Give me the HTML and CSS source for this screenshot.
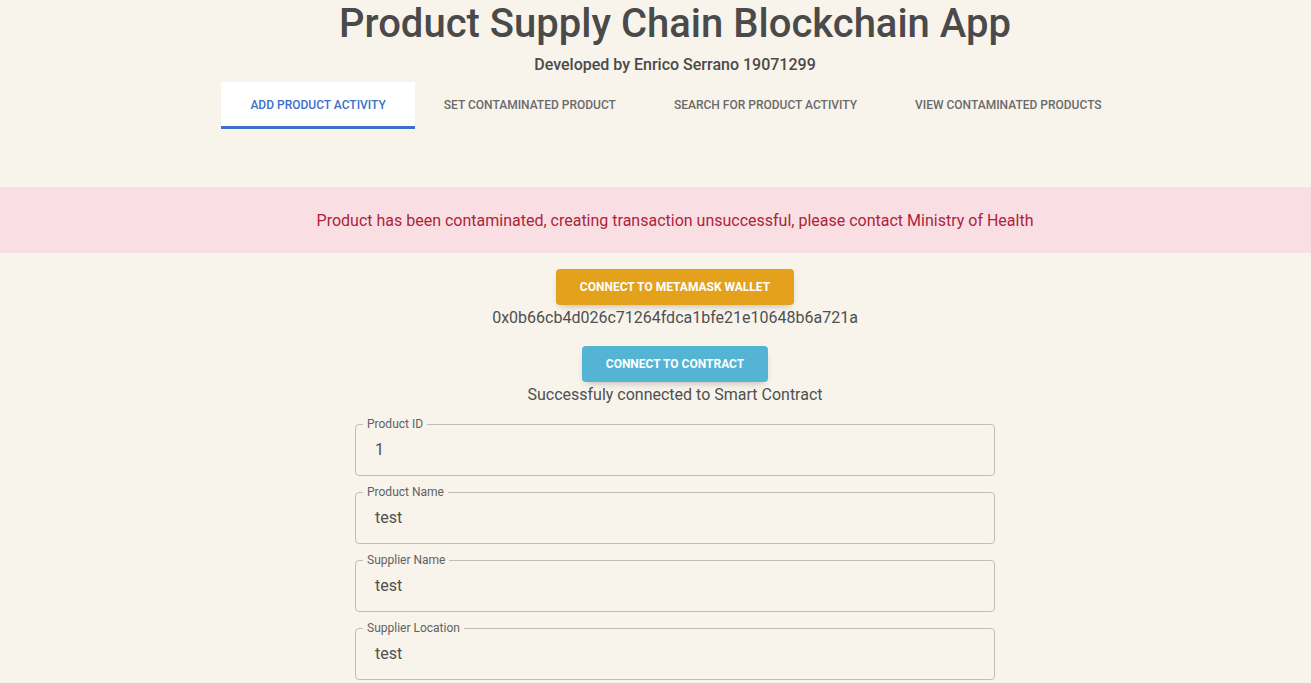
FILE: index.html
```html
<!DOCTYPE html>
<html lang="en">
<head>
<meta charset="utf-8">
<title>Product Supply Chain Blockchain App</title>
<link rel="stylesheet" href="styles.css">
</head>
<body>
<header class="header">
  <h1 class="title">Product Supply Chain Blockchain App</h1>
  <p class="subtitle">Developed by Enrico Serrano 19071299</p>
  <nav class="tabs">
    <a class="tab tab-active">Add Product Activity</a>
    <a class="tab">Set Contaminated Product</a>
    <a class="tab">Search for Product Activity</a>
    <a class="tab">View Contaminated Products</a>
  </nav>
</header>
<div class="alert">Product has been contaminated, creating transaction unsuccessful, please contact Ministry of Health</div>
<main class="content">
  <button class="btn btn-warning">Connect to Metamask Wallet</button>
  <p class="info">0x0b66cb4d026c71264fdca1bfe21e10648b6a721a</p>
  <button class="btn btn-info">Connect to Contract</button>
  <p class="info info-tight">Successfuly connected to Smart Contract</p>
  <form class="form">
    <fieldset class="field"><legend class="field-label">Product ID</legend><span class="field-value">1</span></fieldset>
    <fieldset class="field"><legend class="field-label">Product Name</legend><span class="field-value">test</span></fieldset>
    <fieldset class="field"><legend class="field-label">Supplier Name</legend><span class="field-value">test</span></fieldset>
    <fieldset class="field"><legend class="field-label">Supplier Location</legend><span class="field-value">test</span></fieldset>
  </form>
</main>
</body>
</html>
```
FILE: styles.css
```css
html, body {
  margin: 0;
  padding: 0;
  background: #f8f4ec;
  font-family: Roboto, "Liberation Sans", sans-serif;
  color: #4f4f4f;
  overflow: hidden;
}
.header {
  padding-left: 39px;
  display: flex;
  flex-direction: column;
  align-items: center;
}
.title {
  margin: 0;
  padding-top: 1px;
  font-size: 40px;
  font-weight: 500;
  line-height: 46px;
  color: #4a4a4a;
}
.subtitle {
  margin: 6px 0 0;
  font-size: 16px;
  font-weight: 500;
  line-height: 24px;
  color: #4a4a4a;
}
.tabs {
  display: flex;
  margin-top: 5px;
  margin-left: 2px;
}
.tab {
  display: block;
  padding: 1px 29px 0;
  height: 43px;
  line-height: 44px;
  font-size: 12px;
  font-weight: 500;
  text-transform: uppercase;
  color: #6a6a6a;
  border-bottom: 3px solid transparent;
  white-space: nowrap;
}
.tab-active {
  background: #fff;
  color: #3b71ca;
  border-bottom-color: #3b71ca;
}
.alert {
  margin-top: 58px;
  height: 66px;
  padding-left: 39px;
  display: flex;
  align-items: center;
  justify-content: center;
  background: #f9dfe3;
  color: #af233a;
  font-size: 16px;
}
.content {
  padding-left: 39px;
  display: flex;
  flex-direction: column;
  align-items: center;
  padding-top: 16px;
}
.btn {
  border: none;
  border-radius: 4px;
  height: 36px;
  padding: 0;
  white-space: nowrap;
  font-family: Roboto, "Liberation Sans", sans-serif;
  font-size: 12px;
  font-weight: 700;
  text-transform: uppercase;
  color: #fff;
  box-shadow: 0 4px 9px -4px rgba(0,0,0,0.3);
}
.btn-warning {
  background: #e4a11b;
  width: 238px;
}
.btn-info {
  background: #54b4d3;
  width: 186px;
  margin-top: 18px;
}
.info {
  margin: 3px 0 0;
  font-size: 16px;
  line-height: 20px;
  color: #4f4f4f;
}
.info-tight {
  margin-top: 3px;
}
.form {
  display: flex;
  flex-direction: column;
  gap: 17px;
  margin-top: 12px;
}
.field {
  width: 640px;
  box-sizing: border-box;
  height: 59px;
  margin: 0;
  padding: 0 19px 0 19px;
  border: 1px solid #bdbdbd;
  border-radius: 4px;
  margin-top: -8px;
}
.field:first-child {
  margin-top: 0;
}
.field-label {
  margin-left: -12px;
  padding: 0 4px;
  font-size: 12px;
  line-height: 14px;
  color: #616161;
}
.field-value {
  display: block;
  margin-top: 9px;
  font-size: 16px;
  line-height: 20px;
  color: #4f4f4f;
}
```
